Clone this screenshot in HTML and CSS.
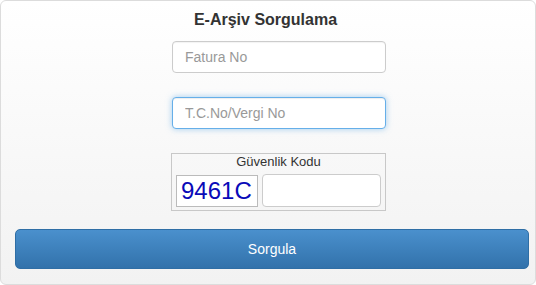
FILE: index.html
```html
<!DOCTYPE html>
<html lang="tr">
<head>
    <meta charset="UTF-8">
    <meta name="viewport" content="width=device-width, initial-scale=1.0">
    <title>E-Arşiv Sorgulama</title>
    <link rel="stylesheet" href="styles.css">
</head>
<body>

<div class="panel">
    <h1 class="title">E-Arşiv Sorgulama</h1>
    <div class="form">
        <input type="text" class="field" placeholder="Fatura No">
        <input type="text" class="field focused" placeholder="T.C.No/Vergi No">
        <div class="captcha">
            <div class="captcha-label">Güvenlik Kodu</div>
            <div class="captcha-row">
                <div class="captcha-code">9461C</div>
                <input type="text" class="captcha-input">
            </div>
        </div>
    </div>
    <button class="submit">Sorgula</button>
</div>

</body>
</html>
```
FILE: styles.css
```css
body {
    margin: 0;
    font-family: 'Liberation Sans', Arial, sans-serif;
    background-color: #fff;
}
.panel {
    width: 536px;
    height: 285px;
    box-sizing: border-box;
    border: 1px solid #dcdcdc;
    border-radius: 6px;
    background: linear-gradient(#fff, #f2f2f2);
    padding: 9px 0 0 0;
}
.title {
    margin: 0;
    font-size: 16px;
    line-height: 20px;
    font-weight: bold;
    color: #333;
    text-align: center;
    padding-right: 5px;
}
.form {
    margin: 11px 0 0 170px;
    width: 215px;
    display: flex;
    flex-direction: column;
    gap: 24px;
}
.field {
    margin-left: 1px;
    width: 214px;
    height: 32px;
    box-sizing: border-box;
    border: 1px solid #ccc;
    border-radius: 4px;
    padding: 0 12px;
    font-family: inherit;
    font-size: 14px;
    color: #555;
    background: #fff;
    box-shadow: inset 0 1px 1px rgba(0, 0, 0, 0.05);
}
.field::placeholder {
    color: #999;
}
.field.focused {
    border-color: #66afe9;
    box-shadow: inset 0 1px 1px rgba(0, 0, 0, 0.07), 0 0 6px rgba(102, 175, 233, 0.6);
    outline: none;
}
.captcha {
    border: 1px solid #c8c8c8;
    padding: 0 4px 3px 4px;
    height: 58px;
    box-sizing: border-box;
}
.captcha-label {
    text-align: center;
    font-size: 13px;
    line-height: 16px;
    color: #333;
}
.captcha-row {
    margin-top: 4px;
    display: flex;
    gap: 4px;
}
.captcha-code {
    width: 82px;
    height: 32px;
    margin-top: 1px;
    box-sizing: border-box;
    border: 1px solid #bbb;
    background: #fff;
    color: #0a0ab8;
    font-size: 24px;
    line-height: 30px;
    padding-left: 4px;
}
.captcha-input {
    width: 119px;
    height: 33px;
    box-sizing: border-box;
    border: 1px solid #ccc;
    border-radius: 4px;
    background: #fff;
}
.submit {
    display: block;
    margin: 18px 0 0 14px;
    width: 514px;
    height: 40px;
    border: 1px solid #2f6ea5;
    border-radius: 5px;
    background: linear-gradient(#4a90cd, #3272ab);
    color: #fff;
    font-family: inherit;
    font-size: 14px;
    cursor: pointer;
}
```
